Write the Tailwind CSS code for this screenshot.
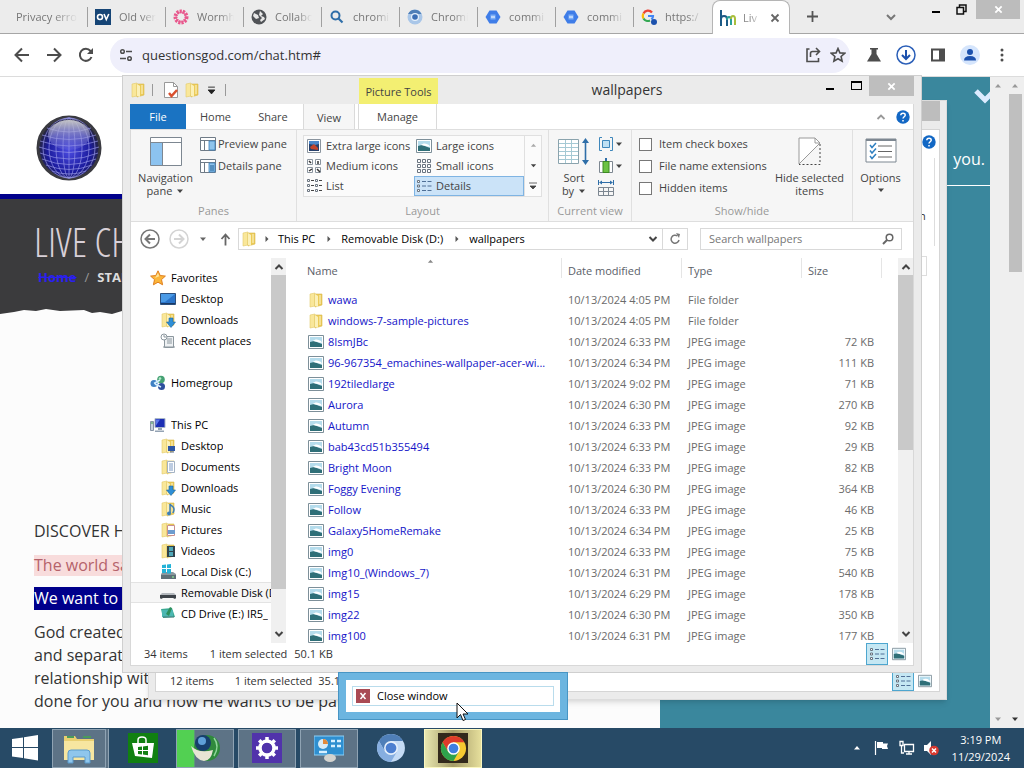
<!DOCTYPE html>
<html lang="en">
<head>
  <meta charset="UTF-8">
  <title>Live Chat</title>
  <script src="https://cdn.jsdelivr.net/npm/@tailwindcss/browser@4"></script>
</head>
<body class="relative h-screen overflow-hidden flex flex-col bg-[#fcfcfc] font-['Open_Sans','Noto_Sans',sans-serif] text-[11px] leading-4 text-black">

  <!-- shared icons -->
  <svg class="hidden">
    <symbol id="i-folder" viewBox="0 0 16 16">
      <path d="M2 2l5-1v13l-5 1z" fill="#f9e79a" stroke="#e3c968" stroke-width=".6"/>
      <path d="M7 2h7v11l-7 2z" fill="#eccb58" stroke="#d9b84e" stroke-width=".6"/>
      <path d="M7 2l3 2v11l-3-1z" fill="#fbf0b8"/>
      <path d="M12 3v9" stroke="#fdf6cf"/>
    </symbol>
    <symbol id="i-pic" viewBox="0 0 16 16">
      <path d="M.5 1.500h15v13H.5z" fill="#fff" stroke="#7d8f99"/>
      <path d="M2 3h12v10H2z" fill="#b5dcec"/>
      <path d="M2 8l4-1 8 3v3H2z" fill="#2f6f78"/>
      <path d="M5 7c2-2 5-2 8 0l1 2z" fill="#fff"/>
    </symbol>
    <symbol id="i-star" viewBox="0 0 16 16">
      <path d="M8 .8l2.200 4.700 5.200.6-3.900 3.500 1.100 5.200L8 12.200l-4.600 2.600 1.100-5.200L.6 6.100l5.200-.6z" fill="#fbb63a" stroke="#e07f1f"/>
      <path d="M8 3l1.300 3.300L5 8z" fill="#fde39a"/>
    </symbol>
    <symbol id="i-desktop" viewBox="0 0 16 16">
      <path d="M.5 2.500h15v11h-15z" fill="#2b74c9" stroke="#2c4f7c"/>
      <path d="M1 3h14L5 11H1z" fill="#4a9ae6"/><path d="M1 12h14v1H1z" fill="#1a3a66"/>
    </symbol>
    <symbol id="i-downloads" viewBox="0 0 16 16">
      <use href="#i-folder"/><path d="M9 6h4v4h2.500L11 15.500 6.500 10H9z" fill="#2f8fd6" stroke="#1b649f" stroke-width=".6"/>
    </symbol>
    <symbol id="i-recent" viewBox="0 0 16 16">
      <path d="M4.500 3.500h9v11h-9z" fill="#eef1f3" stroke="#8c979e"/><circle cx="4" cy="4" r="3" fill="#fff" stroke="#8c979e"/>
      <path d="M4 2v2h2M7 6h5M7 8h5M7 10h5M3 14h12" stroke="#8c979e" fill="none"/>
    </symbol>
    <symbol id="i-home" viewBox="0 0 16 16">
      <circle cx="11" cy="4.500" r="3.800" fill="#45a173"/><circle cx="4" cy="8.500" r="3.500" fill="#3f80c4"/><circle cx="11.500" cy="11.500" r="3.500" fill="#2d4f9d"/>
      <path d="M4 8.500L10 5M5 9l6 3" stroke="#d5efff" stroke-width="1.500"/><circle cx="10" cy="3.500" r="1.300" fill="#b7ebc9"/>
    </symbol>
    <symbol id="i-pc" viewBox="0 0 16 16">
      <path d="M5 1.500h10v9H5z" fill="#1c2fb4" stroke="#a9b6c8"/><path d="M6 2.500h4l-4 6z" fill="#5d79ea"/>
      <path d="M8 11h4v2H8zM5 13.500h9V15H5z" fill="#94a3b4"/><path d="M.5 4.500h3v9h-3z" fill="#c9d2dc" stroke="#8795a6"/><path d="M1 6h2" stroke="#3fa24b"/>
    </symbol>
    <symbol id="i-fdesk" viewBox="0 0 16 16"><use href="#i-folder"/><path d="M8 8h7v5H8z" fill="#2d56a5"/><path d="M10 14h4" stroke="#5a6c8d"/></symbol>
    <symbol id="i-fdoc" viewBox="0 0 16 16"><use href="#i-folder"/><path d="M7.500 2.500h7v11h-7z" fill="#fff" stroke="#a5b3c3"/><path d="M9 5h4M9 7h4M9 9h4M9 11h4" stroke="#7c9ac4"/></symbol>
    <symbol id="i-fmusic" viewBox="0 0 16 16"><use href="#i-folder"/><path d="M10 12V3c1 2 4 2 4 5s-1 3-1 4" fill="none" stroke="#3d7fb6" stroke-width="1.500"/><circle cx="9" cy="12.500" r="2" fill="#3d7fb6"/></symbol>
    <symbol id="i-fpic" viewBox="0 0 16 16"><use href="#i-folder"/><path d="M7.500 3.500h7v10h-7z" fill="#fff" stroke="#c98f8f"/><path d="M8 8h7v4H8z" fill="#6d9cce"/></symbol>
    <symbol id="i-fvid" viewBox="0 0 16 16"><use href="#i-folder"/><path d="M7 3h8v11H7z" fill="#30424c"/><path d="M9 4h4v4H9zM9 9h4v4H9z" fill="#4fa8b8"/></symbol>
    <symbol id="i-disk" viewBox="0 0 16 16"><path d="M1 10l2-2h10l3 2v5H1z" fill="#8a979e"/><path d="M1 11h15v4H1z" fill="#5f7078"/><path d="M2 1l4-.5V4H2zM7 .4L11 0v4H7zM2 5h4v4H2zM7 5h4v4.500H7z" fill="#24b3d8"/><path d="M12 13h2" stroke="#9f9"/></symbol>
    <symbol id="i-usb" viewBox="0 0 16 16"><path d="M2 8h12l2 2H0z" fill="#b3b8bd"/><path d="M0 10h16v3l-1 1-2-1H3l-2 1-1-1z" fill="#3d4349"/></symbol>
    <symbol id="i-cd" viewBox="0 0 16 16"><path d="M1 3l11-1 3 9-12 1z" fill="#3ba993"/><path d="M2 4h11v7H2z" fill="#4cb7b2"/><path d="M6 8l4-7 2 1-3 8z" fill="#2d8f5c"/><path d="M3 11h11" stroke="#477"/></symbol>
    <symbol id="i-list" viewBox="0 0 16 16">
      <path d="M1.500 2.500h2v2h-2zM1.500 7h2v2h-2zM1.500 11.500h2v2h-2z" fill="#fff" stroke="#6a7480"/>
      <path d="M6 3.500h4M11.500 3.500h4M6 8h4M11.500 8h4M6 12.500h4M11.500 12.500h4" stroke="#4f6f96"/>
    </symbol>
    <symbol id="i-listview" viewBox="0 0 16 16">
      <path d="M1.500 1.500h2v2h-2zM1.500 6.500h2v2h-2zM1.500 11.500h2v2h-2zM9.500 1.500h2v2h-2zM9.500 6.500h2v2h-2zM9.500 11.500h2v2h-2z" fill="#fff" stroke="#6a7480"/>
      <path d="M5 2.500h3M5 7.500h3M5 12.500h3M13 2.500h3M13 7.500h3M13 12.500h3" stroke="#444"/>
    </symbol>
    <symbol id="i-small" viewBox="0 0 16 16">
      <path d="M1.500 1.500h3v3h-3zM6.500 1.500h3v3h-3zM11.500 1.500h3v3h-3zM1.500 6.500h3v3h-3zM6.500 6.500h3v3h-3zM11.500 6.500h3v3h-3zM1.500 11.500h3v3h-3zM6.500 11.500h3v3h-3zM11.500 11.500h3v3h-3z" fill="#fff" stroke="#6a7480"/>
    </symbol>
    <symbol id="i-medium" viewBox="0 0 16 16">
      <path d="M1.500 1.500h5v5h-5zM9.500 1.500h5v5h-5zM1.500 9.500h5v5h-5zM9.500 9.500h5v5h-5z" fill="#fff" stroke="#8a949e"/>
      <path d="M3 3l2 2M12 3v3M3 13l3-2M11 11l3 3" stroke="#333" stroke-width="1.500"/>
    </symbol>
    <symbol id="i-xl" viewBox="0 0 16 16">
      <path d="M1.500 1.500h13v13h-13z" fill="#fff" stroke="#8a949e"/><path d="M3 3h10v10H3z" fill="#27406b"/><path d="M3 3h10v3L9 7 3 6z" fill="#4b86c9"/><path d="M4 9l4-3 4 4v2l-7-1z" fill="#c2452d"/>
    </symbol>
    <symbol id="i-pane" viewBox="0 0 16 16">
      <path d="M.5 1.500h15v13H.5z" fill="#fff" stroke="#6f7b87"/><path d="M.5 4.500h15M4.500 4.500v10" stroke="#6f7b87"/><path d="M9 5h6v9H9z" fill="#8fc4ec" stroke="#3b82bd" stroke-width=".8"/>
    </symbol>
    <symbol id="i-pane2" viewBox="0 0 16 16">
      <path d="M.5 1.500h15v13H.5z" fill="#fff" stroke="#6f7b87"/><path d="M.5 4.500h15M4.500 4.500v10" stroke="#6f7b87"/><path d="M9 5h6v9H9z" fill="#8fc4ec" stroke="#3b82bd" stroke-width=".8"/><path d="M10 8h4M10 10h4M10 12h4" stroke="#1d5c94"/>
    </symbol>
    <symbol id="i-help" viewBox="0 0 14 14">
      <circle cx="7" cy="7" r="6.700" fill="#1267c4"/><path d="M4.800 5.200C4.800 2.400 9.400 2.500 9.200 5.200 9.100 6.700 7 6.800 7 8.600M7 9.900v1.500" fill="none" stroke="#fff" stroke-width="1.500"/>
    </symbol>
    <symbol id="i-gcp" viewBox="0 0 16 16"><path d="M4.500 1.500h7L15.500 8l-4 6.500h-7L.5 8z" fill="#3f7de8"/><path d="M5.500 5.500h5v5h-5z" fill="#7fb0f7"/><path d="M6 8h4" stroke="#fff"/></symbol>
    <symbol id="i-up" viewBox="0 0 10 10"><path d="M1.500 7L5 3.500 8.500 7" fill="none" stroke="#444" stroke-width="2"/></symbol>
    <symbol id="i-down" viewBox="0 0 10 10"><path d="M1.500 3L5 6.500 8.500 3" fill="none" stroke="#444" stroke-width="2"/></symbol>
    <symbol id="i-tri" viewBox="0 0 8 8"><path d="M1 2.500h6L4 6z" fill="currentColor"/></symbol>
    <symbol id="i-right" viewBox="0 0 8 8"><path d="M2.500 1v6l3-3z" fill="#555"/></symbol>
    <symbol id="i-chrome" viewBox="0 0 28 28">
      <circle cx="14" cy="14" r="13" fill="#f7c930"/>
      <path d="M2.700 7.500A13 13 0 0 1 25.300 7.500H14L8.400 17.300z" fill="#de3b2b"/>
      <path d="M2.700 7.500A13 13 0 0 0 14 27l5.600-9.800L14 20l-5.600-3z" fill="#2ea24c"/>
      <circle cx="14" cy="14" r="6.500" fill="#fff"/><circle cx="14" cy="14" r="5" fill="#3f7fe0"/>
    </symbol>
    <symbol id="i-chromium" viewBox="0 0 28 28">
      <circle cx="14" cy="14" r="13" fill="#c4dbf5"/>
      <path d="M2.700 7.500A13 13 0 0 1 25.300 7.500H14L8.400 17.300z" fill="#4f7fb8"/>
      <path d="M2.700 7.500A13 13 0 0 0 14 27l5.600-9.800L14 20l-5.600-3z" fill="#86aee0"/>
      <circle cx="14" cy="14" r="6.500" fill="#e6f0fb"/><circle cx="14" cy="14" r="5" fill="#4c7fd0"/>
    </symbol>
  </svg>

  <!-- browser tabs -->
  <header class="flex h-[34px] shrink-0 bg-[#ececec] border-b border-[#a6a6a6] text-[#777]">
    <div id="tabs" class="flex items-center"></div>
    <div class="relative -mb-px flex w-[78px] items-center rounded-t-lg border border-b-0 border-[#b5b5b5] bg-white pl-[6px]">
      <svg class="size-[18px]" viewBox="0 0 18 18" fill="none" stroke-width="2"><path d="M2 1v16M2 10c0-4 6-4 6 0v7" stroke="#1c5a86"/><path d="M8 11c0-4 4-4 4 0v5" stroke="#2aa198"/><path d="M12 10c0-4 4-4 4 0v6" stroke="#a9bf3c"/></svg>
      <span class="ml-[6px] w-[18px] overflow-hidden whitespace-nowrap text-[#888] mask-r-from-40%">Liv</span>
      <button aria-label="Close tab" class="ml-[9px]"><svg class="size-[10px]" viewBox="0 0 10 10"><path d="M1.500 1.500l7 7M8.500 1.500l-7 7" stroke="#666" stroke-width="1.800"/></svg></button>
    </div>
    <button aria-label="New tab" class="ml-[16px]"><svg class="size-[13px]" viewBox="0 0 13 13"><path d="M6.500 1v11M1 6.500h11" stroke="#555" stroke-width="1.800"/></svg></button>
    <div class="ml-auto flex items-start">
      <button aria-label="Search tabs" class="mt-[11px] mr-[35px]"><svg class="size-[12px]" viewBox="0 0 12 12"><path d="M2 4l4 4 4-4" fill="none" stroke="#777" stroke-width="2"/></svg></button>
      <button aria-label="Minimize" class="mt-[11px] h-[2px] w-[8px] bg-black"></button>
      <button aria-label="Restore" class="mt-[4px] ml-[16px]"><svg class="size-[11px]" viewBox="0 0 11 11" fill="none" stroke="#111" stroke-width="1.500"><path d="M1 3.500h6.500V10H1zM3.500 3V1H10v6.500H8"/></svg></button>
      <button aria-label="Close" class="ml-[9px] mr-[4px] flex h-[19px] w-[44px] items-center justify-center bg-[#bcbcbc]"><svg class="size-[9px]" viewBox="0 0 10 10"><path d="M1.500 1.500l7 7M8.500 1.500l-7 7" stroke="#fff" stroke-width="2"/></svg></button>
    </div>
  </header>

  <!-- browser toolbar -->
  <nav class="flex h-[43px] shrink-0 items-center border-b border-[#dcdcdc] bg-white px-[14px] text-[#4d4d4d]">
    <div class="flex gap-4">
      <button aria-label="Back"><svg class="size-4" viewBox="0 0 16 16" fill="none" stroke="currentColor" stroke-width="2"><path d="M15 8H2M8 1.500L1.500 8 8 14.500"/></svg></button>
      <button aria-label="Forward"><svg class="size-4" viewBox="0 0 16 16" fill="none" stroke="currentColor" stroke-width="2"><path d="M1 8h13M8 1.500L14.500 8 8 14.500"/></svg></button>
      <button aria-label="Reload"><svg class="size-4" viewBox="0 0 16 16"><path d="M13.500 10A6 6 0 1 1 12.500 4L14 5.500" fill="none" stroke="currentColor" stroke-width="2"/><path d="M15 1v6H9z" fill="currentColor"/></svg></button>
    </div>
    <div class="ml-4 flex h-[35px] flex-1 items-center rounded-full bg-[#efeffb] pl-[9px] pr-1">
      <svg class="size-[14px]" viewBox="0 0 14 14" fill="none" stroke="currentColor" stroke-width="1.500"><circle cx="3.500" cy="3.500" r="1.800"/><path d="M7 3.500h6M1 10.500h6"/><circle cx="10.500" cy="10.500" r="1.800"/></svg>
      <input aria-label="Address" value="questionsgod.com/chat.htm#" class="ml-[9px] min-w-0 flex-1 bg-transparent text-[13px] text-[#333] outline-none">
      <button aria-label="Share" class="mr-[9px]"><svg class="size-4" viewBox="0 0 16 16" fill="none" stroke="currentColor" stroke-width="1.600"><path d="M4.500 2H2v12.500h11.500V11M5.500 10V6.500q0-2 2-2H14M11 1l3.500 3.500L11 8"/></svg></button>
      <button aria-label="Bookmark"><svg class="size-4" viewBox="0 0 16 16"><path d="M8 1.500l1.900 4.400 4.800.4-3.600 3.200 1 4.700L8 11.700l-4.100 2.500 1-4.700L1.300 6.300l4.800-.4z" fill="none" stroke="currentColor" stroke-width="1.600"/></svg></button>
    </div>
    <div class="ml-4 flex items-center gap-4">
      <button aria-label="Labs"><svg class="size-4" viewBox="0 0 16 16"><path d="M4 1h8v1.500h-1.500V7L15 14.500H1L5.500 7V2.500H4z" fill="currentColor"/></svg></button>
      <button aria-label="Downloads" class="-mx-[2px]"><svg class="size-5" viewBox="0 0 20 20" fill="none"><circle cx="10" cy="10" r="9" stroke="#2b5fb8" stroke-width="1.500"/><path d="M10 5v9M6 10l4 4 4-4" stroke="#1c51ad" stroke-width="2"/></svg></button>
      <button aria-label="Side panel"><svg class="size-4" viewBox="0 0 16 16"><path d="M2 2.500h12v11H2z" fill="none" stroke="currentColor" stroke-width="2"/><path d="M9 3h5v10H9z" fill="currentColor"/></svg></button>
      <button aria-label="Profile" class="-mx-[2px]"><svg class="size-5" viewBox="0 0 20 20"><circle cx="10" cy="10" r="10" fill="#d5e5fc"/><circle cx="10" cy="7" r="3" fill="#1c51ad"/><path d="M4 15.500q0-4.500 6-4.500t6 4.500z" fill="#1c51ad"/></svg></button>
      <button aria-label="Menu"><svg class="size-4" viewBox="0 0 16 16" fill="currentColor"><circle cx="8" cy="3" r="1.500"/><circle cx="8" cy="8" r="1.500"/><circle cx="8" cy="13" r="1.500"/></svg></button>
    </div>
  </nav>

  <!-- web page -->
  <main class="flex min-h-0 flex-1 overflow-hidden">
    <section class="min-w-0 flex-1 overflow-hidden text-base text-[#333]">
      <div class="flex h-[117px] items-center bg-white pl-9 pt-6">
        <svg class="size-[66px]" viewBox="0 0 66 66">
          <defs>
            <radialGradient id="ball" cx=".5" cy=".55" r=".5"><stop offset="0" stop-color="#4a4ae0"/><stop offset=".7" stop-color="#1a1a9c"/><stop offset="1" stop-color="#262640"/></radialGradient>
            <linearGradient id="shine" x1="0" y1="0" x2="0" y2="1"><stop offset="0" stop-color="#c4c4c8"/><stop offset="1" stop-color="#8080e8" stop-opacity="0.200"/></linearGradient>
          </defs>
          <circle cx="33" cy="33" r="31" fill="url(#ball)" stroke="#3a3a40" stroke-width="3"/>
          <g fill="none" stroke="#9393e6" stroke-width=".7">
            <ellipse cx="33" cy="33" rx="6" ry="30"/><ellipse cx="33" cy="33" rx="13" ry="30"/><ellipse cx="33" cy="33" rx="20" ry="30"/><ellipse cx="33" cy="33" rx="26" ry="30"/><path d="M33 3v60"/>
            <path d="M11 13q22 8 44 0M6 20q27 9 54 0M4 26q29 10 58 0M3 32q30 11 60 0M4 38q29 12 58 0M6 44q27 11 54 0M10 50q23 9 46 0M16 56q17 6 34 0"/>
          </g>
          <ellipse cx="33" cy="20" rx="21" ry="15" fill="url(#shine)"/>
        </svg>
      </div>
      <div class="h-[5px] bg-[#00008b]"></div>
      <div class="h-[109px] bg-[#3b3b3d] pl-[34px] pt-4">
        <h1 class="h-[54px] whitespace-nowrap font-['Open_Sans_Condensed_Light','OpenSans-CondensedLight','Open_Sans_Condensed','Liberation_Sans_Narrow',sans-serif] text-[40px] font-light leading-[54px] text-[#d8d0d8]">LIVE CHAT</h1>
        <p class="flex gap-2 pl-1 text-[13px] font-bold leading-[16px] text-[#ddd]"><a href="#" class="text-[#2a1ff0] line-through">Home</a><span class="font-normal text-[#999]">/</span><span>START</span></p>
      </div>
      <svg class="block h-[8px] w-full" viewBox="0 0 660 8" preserveAspectRatio="none"><path d="M0 0h660v4L122 3 112 6 100 4 92 5 84 2 60 3 46 1 36 3 24 2 14 4 0 6z" fill="#3b3b3d"/></svg>
      <div class="flex flex-col items-start pl-[34px] pt-[204px] leading-[23px] whitespace-nowrap">
        <p>DISCOVER HIM</p>
        <p class="mt-3 h-[21px] bg-[#f8dcdc] leading-[21px] text-[#b5626a]">The world says</p>
        <p class="mt-[11px] bg-[#00008b] text-white">We want to share</p>
        <p class="mt-[11px]">God created the heavens<br>and separated us for a<br>relationship with us all<br>done for you and how He wants to be part of</p>
      </div>
    </section>
    <aside class="w-[330px] bg-[#3a879d] pt-[8px] text-base text-white">
      <div class="flex justify-end overflow-hidden"><svg class="-mr-[7px] h-[21px] w-[24px]" viewBox="0 0 24 21"><path d="M3 6l9 9L21 6" fill="none" stroke="#dcebff" stroke-width="5"/></svg></div>
      <p class="mt-[41px] border-b border-white pb-[14px] pr-[5px] text-right leading-[24px]">you.</p>
    </aside>
    <div class="flex w-[34px] justify-between bg-[#efefef] px-[4px]">
      <div class="flex flex-col justify-between py-[5px] text-[#999]"><svg class="size-[8px] rotate-180"><use href="#i-tri"/></svg><svg class="size-[8px]"><use href="#i-tri"/></svg></div>
      <div class="flex w-[10px] flex-col items-center py-[5px] text-[#333]">
        <svg class="size-[8px] rotate-180 text-[#999]"><use href="#i-tri"/></svg>
        <div class="mt-[4px] h-[178px] w-[13px] bg-[#bfbfbf]"></div>
        <svg class="mt-auto size-[8px]"><use href="#i-tri"/></svg>
      </div>
    </div>
  </main>

  <!-- second explorer window, mostly covered -->
  <div class="absolute top-[100px] right-[77px] bottom-[68px] left-[148px] flex flex-col border border-[#dcdcdc] bg-[#ebebeb] px-[6px] pb-[7px] shadow-md">
    <div class="flex h-[28px] justify-end"><div class="h-[20px] w-[44px] bg-[#bdbdbd]"></div></div>
    <div class="relative flex flex-1 flex-col justify-end border border-[#d5d5d5] bg-white">
      <svg class="absolute top-[5px] right-[3px] size-[14px]"><use href="#i-help"/></svg>
      <div class="absolute top-[28px] right-[4px] flex h-[88px] w-4 items-end border-r border-[#ddd] pb-[22px] text-[#333]">n</div>
      <div class="absolute top-[126px] right-[12px] h-[20px] w-[60px] border border-[#ddd]"></div>
      <div class="flex h-5 items-center pl-[14px] pr-[7px] text-[#333]">
        <span>12 items</span><span class="ml-[21px]">1 item selected</span><span class="ml-[6px]">35.1 KB</span>
        <span class="ml-auto flex h-5 w-[22px] items-center justify-center border border-[#4ea6cf] bg-[#c5e7f3]"><svg class="size-4"><use href="#i-list"/></svg></span>
        <svg class="ml-1 size-[14px]"><use href="#i-pic"/></svg>
      </div>
    </div>
  </div>

  <!-- front explorer window -->
  <div class="absolute top-[75px] right-[102px] bottom-[95px] left-[122px] flex flex-col border border-[#cfcfcf] bg-[#ebebeb] px-[7px] pb-[6px]">
    <div class="relative flex h-[28px] shrink-0 items-center">
      <svg class="size-4"><use href="#i-folder"/></svg>
      <span class="ml-[6px] h-3 w-px bg-[#999]"></span>
      <svg class="ml-[10px] size-4" viewBox="0 0 16 16"><path d="M1.500.5h9l4 4v11h-13z" fill="#fff" stroke="#999"/><path d="M10.500.5v4h4" fill="none" stroke="#999"/><path d="M6 11l2.500 3L14 8" fill="none" stroke="#d9502f" stroke-width="2.500"/></svg>
      <svg class="ml-[5px] size-4"><use href="#i-folder"/></svg>
      <svg class="ml-[7px] size-[9px]" viewBox="0 0 8 8"><path d="M1 1h6M1 3.500h6L4 7z" fill="#222" stroke="#222" stroke-width=".8"/></svg>
      <span class="ml-[9px] h-3 w-px bg-[#999]"></span>
      <span class="absolute bottom-0 left-[229px] flex h-[26px] w-[79px] items-center justify-center bg-[#f3ef72] pt-[2px] text-[#444]">Picture Tools</span>
      <h2 class="absolute inset-x-0 top-1 pl-[210px] text-center text-[14px] leading-5 text-[#333]">wallpapers</h2>
      <div class="relative ml-auto flex h-full items-start">
        <button aria-label="Minimize" class="mt-[12px] h-[2px] w-[8px] bg-black"></button>
        <button aria-label="Maximize" class="mt-[5px] ml-[17px] h-[9px] w-[11px] border border-t-2 border-black"></button>
        <button aria-label="Close" class="ml-[7px] flex h-[20px] w-[45px] items-center justify-center bg-[#bebebe]"><svg class="size-[9px]" viewBox="0 0 10 10"><path d="M1.500 1.500l7 7M8.500 1.500l-7 7" stroke="#fff" stroke-width="2"/></svg></button>
      </div>
    </div>

    <div class="flex min-h-0 flex-1 flex-col border border-t-0 border-[#d8d8d8] bg-white">
      <!-- ribbon tabs -->
      <div class="flex h-[25px] shrink-0 text-[#444]">
        <button class="-ml-px w-[56px] bg-[#1a73c2] text-white">File</button>
        <button class="w-[59px]">Home</button>
        <button class="w-[56px]">Share</button>
        <button class="-mb-px ml-[2px] w-[52px] border-x border-[#dadada] bg-[#f6f6f6] pt-px">View</button>
        <button class="ml-[3px] w-[79px] border-x border-[#dadada] pt-px">Manage</button>
        <button aria-label="Collapse ribbon" class="ml-auto"><svg class="size-[10px]" viewBox="0 0 10 10"><path d="M1.500 7L5 3.500 8.500 7" fill="none" stroke="#999" stroke-width="1.800"/></svg></button>
        <button aria-label="Help" class="mr-[3px] ml-[10px]"><svg class="size-[14px]"><use href="#i-help"/></svg></button>
      </div>

      <!-- ribbon -->
      <div class="flex h-[93px] shrink-0 border-y border-[#dedede] bg-[#f6f6f6] text-[#444]">
        <div class="flex w-[166px] flex-col justify-between border-r border-[#e0e0e0]">
          <div class="flex">
            <button class="flex w-[69px] flex-col items-center pt-[7px] leading-[13px]">
              <svg class="mb-[5px] h-[29px] w-8" viewBox="0 0 32 29"><path d="M.5.5h31v28H.5z" fill="#fff" stroke="#7d8791"/><path d="M.5 5.500h31M12.500 5.500v23" stroke="#7d8791"/><path d="M1 6h11v22H1z" fill="#8cc3f0"/></svg>
              <span>Navigation</span><span class="flex items-center gap-1">pane <svg class="size-[8px]"><use href="#i-tri"/></svg></span>
            </button>
            <div class="flex flex-col gap-[6px] pt-[6px]">
              <button class="flex items-center gap-[2px]"><svg class="size-4"><use href="#i-pane"/></svg>Preview pane</button>
              <button class="flex items-center gap-[2px]"><svg class="size-4"><use href="#i-pane2"/></svg>Details pane</button>
            </div>
          </div>
          <span class="pb-[2px] text-center text-[#999]">Panes</span>
        </div>
        <div class="flex w-[252px] flex-col justify-between border-r border-[#e0e0e0] pt-[5px]">
          <div class="ml-[6px] flex w-[239px] border border-[#e0e0e0] bg-[#fbfbfb]">
            <div class="grid w-[220px] grid-cols-[110px_110px] grid-rows-3">
              <button class="flex h-5 items-center gap-1 whitespace-nowrap pl-[2px]"><svg class="size-4 shrink-0"><use href="#i-xl"/></svg>Extra large icons</button>
              <button class="flex h-5 items-center gap-1 pl-[2px]"><svg class="size-4"><use href="#i-pic"/></svg>Large icons</button>
              <button class="flex h-5 items-center gap-1 pl-[2px]"><svg class="size-4"><use href="#i-medium"/></svg>Medium icons</button>
              <button class="flex h-5 items-center gap-1 pl-[2px]"><svg class="size-4"><use href="#i-small"/></svg>Small icons</button>
              <button class="flex h-5 items-center gap-1 pl-[2px]"><svg class="size-4"><use href="#i-listview"/></svg>List</button>
              <button class="flex h-5 items-center gap-1 border border-[#7fb4e3] bg-[#cbe3f8] pl-px"><svg class="size-4"><use href="#i-list"/></svg>Details</button>
            </div>
            <div class="flex flex-1 flex-col items-center justify-around border-l border-[#e0e0e0]">
              <svg class="size-[7px] rotate-180 text-[#aaa]"><use href="#i-tri"/></svg>
              <svg class="size-[7px]"><use href="#i-tri"/></svg>
              <svg class="size-[8px]" viewBox="0 0 8 8"><path d="M0 1h8M1 4h6L4 7z" fill="#444" stroke="#444" stroke-width=".8"/></svg>
            </div>
          </div>
          <span class="pb-[2px] text-center text-[#999]">Layout</span>
        </div>
        <div class="flex w-[83px] flex-col justify-between border-r border-[#e0e0e0]">
          <div class="flex justify-center gap-[7px]">
            <button class="flex w-[34px] flex-col items-center pt-[7px] leading-[13px]">
              <svg class="mb-[5px] h-[29px] w-8" viewBox="0 0 32 29"><path d="M.5 2.500h20v24H.5z" fill="#fff" stroke="#8aa3ad"/><path d="M1 6.500h19M1 10.500h19M1 14.500h19M1 18.500h19M1 22.500h19M7.500 3v23M13.500 3v23" stroke="#a5c9d4"/><path d="M27.500 4v21" stroke="#2f6ea8" stroke-width="1.600"/><path d="M27.500 1l3.500 5h-7zM27.500 28l3.500-5h-7z" fill="#2f6ea8"/></svg>
              <span>Sort</span><span class="flex items-center gap-1">by <svg class="size-[8px]"><use href="#i-tri"/></svg></span>
            </button>
            <div class="flex flex-col gap-[6px] pt-[6px]">
              <button aria-label="Group by" class="flex items-center gap-px"><svg class="size-4" viewBox="0 0 16 16" fill="none" stroke="#3f87bb"><path d="M4 1.500H1.500v13H4M12 1.500h2.500v13H12"/><path d="M4.500 4.500h7v7h-7z" fill="#bfe0f3"/></svg><svg class="size-[8px]"><use href="#i-tri"/></svg></button>
              <button aria-label="Add columns" class="flex items-center gap-px"><svg class="size-4" viewBox="0 0 16 16"><path d="M1.500 3.500h13v11h-13z" fill="#fff" stroke="#7d8791"/><path d="M5 3.500h6v11H5z" fill="#6cc243" stroke="#3d8a22"/><path d="M8 0v3" stroke="#2f6ea8" stroke-width="2"/></svg><svg class="size-[8px]"><use href="#i-tri"/></svg></button>
              <button aria-label="Size columns to fit"><svg class="size-4" viewBox="0 0 16 16" fill="none"><path d="M.5 0v5M15.500 0v5M2 2.500h12" stroke="#2f6ea8"/><path d="M1 2.500L4 .5v4zM15 2.500L12 .5v4z" fill="#2f6ea8"/><path d="M.5 7.500h15v8H.5zM.5 11.500h15M5.500 7.500v8M10.500 7.500v8" stroke="#7d8791"/></svg></button>
            </div>
          </div>
          <span class="pb-[2px] text-center text-[#999]">Current view</span>
        </div>
        <div class="flex w-[221px] flex-col justify-between border-r border-[#e0e0e0]">
          <div class="flex pl-[7px]">
            <div class="flex w-[128px] flex-col gap-[6px] whitespace-nowrap pt-[6px]">
              <label class="flex items-center gap-[7px]"><input type="checkbox" class="size-[13px] appearance-none border border-[#777] bg-white">Item check boxes</label>
              <label class="flex items-center gap-[7px]"><input type="checkbox" class="size-[13px] appearance-none border border-[#777] bg-white">File name extensions</label>
              <label class="flex items-center gap-[7px]"><input type="checkbox" class="size-[13px] appearance-none border border-[#777] bg-white">Hidden items</label>
            </div>
            <button class="flex flex-1 flex-col items-center pt-[7px] leading-[13px] whitespace-nowrap">
              <svg class="mb-[5px] h-[29px] w-6" viewBox="0 0 24 29" fill="none"><path d="M1 27V1h16l5 5L1 27" fill="#fff" stroke="#9a9a9a"/><path d="M17 1v5h5" stroke="#9a9a9a"/><path d="M22 7v20.500H1" stroke="#444" stroke-dasharray="2 2"/></svg>
              <span>Hide selected</span><span>items</span>
            </button>
          </div>
          <span class="pb-[2px] text-center text-[#999]">Show/hide</span>
        </div>
        <button class="flex w-[55px] flex-col items-center pt-[7px] leading-[13px]">
          <svg class="mb-[5px] h-[29px] w-8" viewBox="0 0 32 29" fill="none"><path d="M1 2h30v23H1z" fill="#fff" stroke="#7d8791"/><path d="M1 3h30" stroke="#7d8791" stroke-width="2"/><path d="M13 9h14M13 14.500h14M13 20h14" stroke="#666"/><path d="M5 8l2 2.500L11 6M5 13.500l2 2.500 4-4.500M5 19l2 2.500 4-4.500" stroke="#2f7fc0" stroke-width="1.500"/></svg>
          <span>Options</span><svg class="mt-[2px] size-[8px]"><use href="#i-tri"/></svg>
        </button>
      </div>

      <!-- address row -->
      <div class="flex h-[36px] shrink-0 items-center pr-[11px] pb-[2px] pl-[9px] text-[#333]">
        <button aria-label="Back"><svg class="size-5" viewBox="0 0 20 20" fill="none" stroke="#777"><circle cx="10" cy="10" r="9" stroke-width="1.500"/><path d="M15 10H6M10 5.500L5.500 10l4.500 4.500" stroke-width="2"/></svg></button>
        <button aria-label="Forward" class="ml-[9px]"><svg class="size-5" viewBox="0 0 20 20" fill="none" stroke="#d4d4d4"><circle cx="10" cy="10" r="9" stroke-width="1.500"/><path d="M5 10h9M10 5.500l4.500 4.500-4.500 4.500" stroke-width="2"/></svg></button>
        <svg class="ml-[10px] size-[8px] text-[#666]"><use href="#i-tri"/></svg>
        <button aria-label="Up" class="ml-[12px]"><svg class="size-[13px]" viewBox="0 0 13 13" fill="none" stroke="#666" stroke-width="1.800"><path d="M6.500 12.500V2M2.500 6l4-4.500L10.500 6"/></svg></button>
        <div class="ml-[6px] flex h-[22px] flex-1 items-center border border-[#d9d9d9] pl-[2px] text-black">
          <svg class="size-4"><use href="#i-folder"/></svg>
          <svg class="ml-[6px] size-[8px]"><use href="#i-right"/></svg><a href="#" class="ml-[7px]">This PC</a>
          <svg class="ml-[10px] size-[8px]"><use href="#i-right"/></svg><a href="#" class="ml-[8px]">Removable Disk (D:)</a>
          <svg class="ml-[10px] size-[8px]"><use href="#i-right"/></svg><a href="#" class="ml-[8px]">wallpapers</a>
          <svg class="mr-[4px] ml-auto size-[10px]"><use href="#i-down"/></svg>
          <button aria-label="Refresh" class="flex h-full w-[25px] items-center justify-center border-l border-[#d9d9d9]"><svg class="size-[12px]" viewBox="0 0 12 12"><path d="M10 7A4 4 0 1 1 8.500 3" fill="none" stroke="#777" stroke-width="1.500"/><path d="M7 0l4 1-1 4z" fill="#777"/></svg></button>
        </div>
        <div class="ml-[12px] flex h-[22px] w-[202px] items-center border border-[#d9d9d9] pr-[7px] pl-[8px]">
          <input aria-label="Search" placeholder="Search wallpapers" class="min-w-0 flex-1 outline-none placeholder:text-[#777]">
          <svg class="size-[12px]" viewBox="0 0 12 12" fill="none" stroke="#666"><circle cx="7.500" cy="4.500" r="3.300" stroke-width="1.500"/><path d="M5 7L1 11" stroke-width="2"/></svg>
        </div>
      </div>

      <!-- tree and list -->
      <div class="flex min-h-0 flex-1">
        <div class="w-[140px] shrink-0 overflow-hidden pt-[9px]"><ul id="tree"></ul></div>
        <div class="flex w-[15px] shrink-0 flex-col items-center bg-[#f0f0f0] pt-[4px] pb-[4px]">
          <svg class="size-[10px] shrink-0"><use href="#i-up"/></svg>
          <div class="mt-[3px] h-[314px] w-full bg-[#c9c9c9]"></div>
          <svg class="mt-auto size-[10px] shrink-0"><use href="#i-down"/></svg>
        </div>
        <div class="relative ml-[14px] min-w-0 flex-1 overflow-hidden">
          <svg class="absolute top-0 left-[127px] size-[7px] rotate-180 text-[#888]"><use href="#i-tri"/></svg>
          <table class="w-full table-fixed border-collapse whitespace-nowrap text-[#6b6b6b]">
            <colgroup><col><col class="w-[120px]"><col class="w-[120px]"><col class="w-[80px]"><col class="w-[17px]"></colgroup>
            <thead class="text-left text-[#5a6068]">
              <tr class="h-[31px] align-top">
                <th class="pl-[7px] font-normal"><div class="pt-[5px]">Name</div></th>
                <th class="font-normal"><div class="h-[20px] border-l border-[#e5e5e5] pt-[5px] pl-[6px]">Date modified</div></th>
                <th class="font-normal"><div class="h-[20px] border-l border-[#e5e5e5] pt-[5px] pl-[6px]">Type</div></th>
                <th class="font-normal"><div class="h-[20px] border-l border-[#e5e5e5] pt-[5px] pl-[6px]">Size</div></th>
                <th><div class="h-[20px] border-l border-[#e5e5e5]"></div></th>
              </tr>
            </thead>
            <tbody id="files"></tbody>
          </table>
        </div>
        <div class="flex w-[15px] shrink-0 flex-col items-center bg-[#f0f0f0] pt-[4px] pb-[4px]">
          <svg class="size-[10px] shrink-0"><use href="#i-up"/></svg>
          <div class="mt-[3px] h-[175px] w-full bg-[#c9c9c9]"></div>
          <svg class="mt-auto size-[10px] shrink-0"><use href="#i-down"/></svg>
        </div>
      </div>

      <!-- status bar -->
      <div class="flex h-[22px] shrink-0 items-center pr-[7px] pl-[13px] text-[#333]">
        <span>34 items</span><span class="ml-[22px]">1 item selected</span><span class="ml-[7px]">50.1 KB</span>
        <button aria-label="Details view" class="ml-auto flex h-[22px] w-[22px] items-center justify-center border border-[#4ea6cf] bg-[#c5e7f3]"><svg class="size-4"><use href="#i-list"/></svg></button>
        <button aria-label="Large icons view" class="ml-[4px]"><svg class="size-[14px]"><use href="#i-pic"/></svg></button>
      </div>
    </div>
  </div>

  <!-- jump menu -->
  <div class="absolute bottom-[48px] left-[338px] h-[48px] w-[230px] border border-[#4795c4] bg-[#6cb5e0] p-[7px]">
    <div class="h-full bg-white px-[6px] py-[6px]">
      <button class="flex h-full w-full items-center gap-[7px] border border-[#b9dcec] pl-[3px]">
        <svg class="size-[14px]" viewBox="0 0 14 14"><path d="M0 0h14v14H0z" fill="#a94a54"/><path d="M4.500 4l5 6M9.500 4l-5 6" stroke="#fff" stroke-width="1.500"/></svg>Close window
      </button>
    </div>
  </div>
  <svg class="absolute bottom-[46px] left-[456px] z-10 h-[20px] w-[13px]" viewBox="0 0 13 20"><path d="M1 1v15l3.500-3.500L7 18.500l2.500-1L7 12h5z" fill="#fff" stroke="#111"/></svg>

  <!-- taskbar -->
  <footer class="flex h-10 shrink-0 items-center bg-[#274a66] text-white">
    <button aria-label="Start" class="ml-[12px]"><svg class="size-[26px]" viewBox="0 0 26 26"><path d="M0 4l11-1.500V12H0zM12 2.300L26 0v12H12zM0 13h11v10L0 21.500zM12 13h14v12.500l-14-2.200z" fill="#fff"/></svg></button>
    <button aria-label="File Explorer" class="ml-[14px] flex h-[39px] w-[54px] items-center justify-center border border-[#8fa3b3] bg-[#5d7386]">
      <svg class="size-8" viewBox="0 0 32 32"><path d="M1 4h11l2 3h17v21H1z" fill="#e9cf70"/><path d="M4 5h7M20 5h8" stroke="#4a9a5b" stroke-width="2"/><path d="M1 9h30v19H1z" fill="#f7e6a0"/><path d="M5 31V21q0-3 3-3h16q3 0 3 3v10h-5v-6H10v6z" fill="#8fc6ec" stroke="#5b9bcc"/></svg>
    </button>
    <span class="h-[39px] w-[3px] border-r border-[#8fa3b3] bg-[#5d7386]"></span>
    <button aria-label="Store" class="ml-[19px] flex size-[30px] items-center justify-center bg-[#118011]">
      <svg class="size-[24px]" viewBox="0 0 24 24"><path d="M1 7h22l-2 15L4 20z" fill="#fff"/><path d="M7 7V4q0-3 4-3t4 3v3" fill="none" stroke="#fff" stroke-width="1.500"/><path d="M7 11l4-.5v3.500H7zM12 10.400l5-.6V14h-5zM7 15h4v3.500L7 18zM12 15h5v4.200l-5-.6z" fill="#118011"/></svg>
    </button>
    <button aria-label="Download Manager" class="ml-[18px] flex h-[39px] w-[58px] items-center justify-center border border-[#8fa3b3] bg-linear-to-r from-[#52d052] from-30% to-[#5d7386] to-32%">
      <svg class="size-8" viewBox="0 0 32 32"><circle cx="18" cy="16" r="13" fill="#2f8a3c"/><path d="M2 14q8 8 22 4-2 11-9 11Q6 28 2 14z" fill="#e8e4d4"/><circle cx="14" cy="11" r="8" fill="#173f6d"/><circle cx="13" cy="9" r="4" fill="#5fa0d8"/><path d="M25 6q6 8 0 18" fill="none" stroke="#8fd79a" stroke-width="1.500"/></svg>
    </button>
    <button aria-label="Settings" class="ml-[4px] flex h-[39px] w-[58px] items-center justify-center border border-[#8fa3b3] bg-[#5d7386]">
      <svg class="size-[30px]" viewBox="0 0 30 30"><path d="M0 0h30v30H0z" fill="#5133ab"/><circle cx="15" cy="15" r="7" fill="none" stroke="#fff" stroke-width="3.500"/><path d="M15 4v4M15 22v4M4 15h4M22 15h4M7.200 7.200l3 3M19.800 19.800l3 3M22.800 7.200l-3 3M10.200 19.800l-3 3" stroke="#fff" stroke-width="3.500"/><circle cx="15" cy="15" r="5" fill="#5133ab"/></svg>
    </button>
    <button aria-label="Control Panel" class="ml-[4px] flex h-[39px] w-[58px] items-center justify-center border border-[#8fa3b3] bg-[#5d7386]">
      <svg class="size-[30px]" viewBox="0 0 30 30"><path d="M0 3h30v19H0z" fill="#2e8fd0" stroke="#8fd0f5"/><circle cx="9" cy="11" r="5" fill="#d7ecf8"/><path d="M9 11V6a5 5 0 0 1 5 5z" fill="#e08a3c"/><path d="M17 8h4M23 8h4M17 13h4M23 13h4M5 19h8" stroke="#d7f0ff" stroke-width="2.500"/><ellipse cx="16" cy="25" rx="6" ry="4" fill="#d3d3cf"/></svg>
    </button>
    <button aria-label="Chromium" class="ml-[18px]"><svg class="size-[30px]"><use href="#i-chromium"/></svg></button>
    <button aria-label="Chrome" class="ml-[18px] flex h-[39px] w-[58px] items-center justify-center border border-[#fbf7c0] bg-linear-to-r from-[#e9e7b0] via-[#a59c68] to-[#e6df9c]">
      <span class="flex size-[30px] items-center justify-center bg-[#33291c]"><svg class="size-[27px]"><use href="#i-chrome"/></svg></span>
    </button>
    <div class="ml-auto flex items-center pr-[14px]">
      <svg class="size-[8px] rotate-180"><use href="#i-tri"/></svg>
      <svg class="ml-[13px] size-4" viewBox="0 0 16 16"><path d="M1.500 1v14" stroke="#fff" stroke-width="1.200"/><path d="M3 2h6v1.500h5L13 6l1 3H8V8H3z" fill="#fff"/></svg>
      <svg class="ml-[9px] size-4" viewBox="0 0 16 16" fill="none" stroke="#fff" stroke-width="1.300"><path d="M5.500 4.500h9v7h-9zM7 14h6M10 12v2M1 1.500h3v4H1zM2.500 6v7H5"/></svg>
      <svg class="ml-[8px] size-4" viewBox="0 0 16 16"><path d="M1 5h3l4-4v14l-4-4H1z" fill="#fff"/><circle cx="11" cy="10.500" r="4.800" fill="#d8392f"/><path d="M9 8.500l4 4M13 8.500l-4 4" stroke="#fff" stroke-width="1.500"/></svg>
      <div class="ml-[13px] text-center leading-[17px]"><div>3:19 PM</div><div>11/29/2024</div></div>
    </div>
  </footer>

  <script>
    const tabs = [
      ['', 'Privacy error'],
      ['<path d="M0 0h16v16H0z" fill="#164576"/><circle cx="5" cy="8" r="2.500" fill="none" stroke="#fff" stroke-width="1.600"/><path d="M9 5l2.300 5.500L13.800 5" fill="none" stroke="#fff" stroke-width="1.600"/>', 'Old versi'],
      ['<circle cx="8" cy="8" r="5.500" fill="none" stroke="#e8578c" stroke-width="4" stroke-dasharray="2 1"/><circle cx="8" cy="8" r="5" fill="none" stroke="#e8578c"/>', 'Wormh'],
      ['<circle cx="8" cy="8" r="7.500" fill="#505357"/><path d="M3 4l4 2 1 3-3 1-3-3zM9 2l3 3-2 2 3 1 1 2-4 3-1-2 2-2-3-3z" fill="#e8e8e8"/>', 'Collabo'],
      ['<circle cx="6.500" cy="6.500" r="4" fill="none" stroke="#2f6ea8" stroke-width="2"/><path d="M9.500 9.500l4 4" stroke="#2f6ea8" stroke-width="2.200"/>', 'chromi'],
      ['<circle cx="8" cy="8" r="7.500" fill="#a9c6e8"/><path d="M1 5a7.500 7.500 0 0 1 13.500 0H8z" fill="#4f7fb8"/><circle cx="8" cy="8" r="4" fill="#e6f0fb"/><circle cx="8" cy="8" r="2.800" fill="#3c6fb5"/>', 'Chromi'],
      ['<use href="#i-gcp"/>', 'commi'],
      ['<use href="#i-gcp"/>', 'commi'],
      ['<path d="M11 3.500A5 5 0 0 0 2.500 4.500" fill="none" stroke="#ea4335" stroke-width="2.200"/><path d="M2.500 4.500a5 5 0 0 0 0 5" fill="none" stroke="#fbbc05" stroke-width="2.200"/><path d="M2.500 9.500A5 5 0 0 0 9 11.500" fill="none" stroke="#34a853" stroke-width="2.200"/><path d="M7 7h5q0 2-1.500 3.500" fill="none" stroke="#4285f4" stroke-width="2.200"/><circle cx="13" cy="13" r="3" fill="#1c51ad"/>', 'https:/']
    ];
    document.getElementById('tabs').innerHTML = tabs.map(([icon, text], i) => `
      <div class="flex h-[20px] items-center ${i ? 'w-[78px] pl-[7px]' : 'w-[88px] pl-[16px]'} ${i < 8 ? 'border-r border-[#a0a0a0]' : ''}">
        ${icon ? `<svg class="mr-[8px] size-4 shrink-0" viewBox="0 0 16 16">${icon}</svg>` : ''}
        <span class="${i ? 'w-[37px]' : 'w-[62px]'} overflow-hidden whitespace-nowrap mask-r-from-60%">${text}</span>
      </div>`).join('');

    const tree = [
      ['star', 'Favorites', 0], ['desktop', 'Desktop', 1], ['downloads', 'Downloads', 1], ['recent', 'Recent places', 1], null,
      ['home', 'Homegroup', 0], null,
      ['pc', 'This PC', 0], ['fdesk', 'Desktop', 1], ['fdoc', 'Documents', 1], ['downloads', 'Downloads', 1], ['fmusic', 'Music', 1],
      ['fpic', 'Pictures', 1], ['fvid', 'Videos', 1], ['disk', 'Local Disk (C:)', 1], ['usb', 'Removable Disk (D:)', 1], ['cd', 'CD Drive (E:) IR5_', 1]
    ];
    document.getElementById('tree').innerHTML = tree.map(row => row ? `
      <li class="flex h-[21px] items-center whitespace-nowrap ${row[2] ? 'pl-[29px]' : 'pl-[19px]'} ${row[0] === 'usb' ? 'border-y border-[#e3e3e3] bg-[#f6f6f6]' : ''}">
        <svg class="size-4 shrink-0"><use href="#i-${row[0]}"/></svg><span class="ml-[5px] min-w-0 overflow-hidden">${row[1]}</span>
      </li>` : '<li class="h-[21px]"></li>').join('');

    const files = [
      ['wawa', '4:05'], ['windows-7-sample-pictures', '4:05'], ['8IsmJBc', '6:33', 72],
      ['96-967354_emachines-wallpaper-acer-wi...', '6:34', 111], ['192tiledlarge', '9:02', 71], ['Aurora', '6:30', 270],
      ['Autumn', '6:33', 92], ['bab43cd51b355494', '6:33', 29], ['Bright Moon', '6:33', 82], ['Foggy Evening', '6:30', 364],
      ['Follow', '6:33', 46], ['Galaxy5HomeRemake', '6:34', 25], ['img0', '6:33', 75], ['Img10_(Windows_7)', '6:31', 540],
      ['img15', '6:29', 178], ['img22', '6:30', 350], ['img100', '6:31', 177]
    ];
    document.getElementById('files').innerHTML = files.map(([name, time, size]) => `
      <tr class="h-[21px]">
        <td class="pl-[8px]"><a href="#" class="flex items-center gap-[4px] text-[#1414c8]"><svg class="size-4 shrink-0"><use href="#i-${size ? 'pic' : 'folder'}"/></svg>${name}</a></td>
        <td class="pl-[7px]">10/13/2024 ${time} PM</td>
        <td class="pl-[7px]">${size ? 'JPEG image' : 'File folder'}</td>
        <td class="pr-[7px] text-right">${size ? size + ' KB' : ''}</td>
        <td></td>
      </tr>`).join('');
  </script>
</body>
</html>
